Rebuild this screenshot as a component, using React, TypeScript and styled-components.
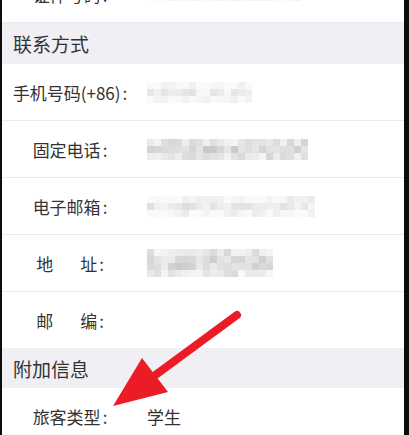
import React from 'react';
import styled, { createGlobalStyle } from 'styled-components';

const GlobalStyle = createGlobalStyle`
    html, body {
        margin: 0;
        padding: 0;
        background: #0d0d0d;
    }
    body {
        font-family: "Noto Sans CJK SC", "Noto Sans", sans-serif;
    }
`;

const Screen = styled.div`
    position: relative;
    width: 409px;
    height: 435px;
    overflow: hidden;
    background: #0d0d0d;
`;

const Panel = styled.div`
    margin: -34px 5px 0 2px;
    background: #fff;
    display: flex;
    flex-direction: column;
`;

const SectionHeader = styled.div<{ $h: number }>`
    height: ${(p) => p.$h}px;
    display: flex;
    align-items: center;
    padding-left: 11px;
    background: #efeff4;
    color: #333;
    font-size: 19px;
`;

const Row = styled.div<{ $last?: boolean }>`
    height: 56px;
    display: flex;
    align-items: center;
    border-bottom: ${(p) => (p.$last ? 'none' : '1px solid #ececee')};
    color: #333;
    font-size: 17px;
`;

const Label = styled.div`
    width: 136px;
    flex-shrink: 0;
    text-align: center;
    white-space: nowrap;
    display: flex;
    justify-content: center;
`;

const Gap = styled.span<{ $w: number }>`
    display: inline-block;
    width: ${(p) => p.$w}px;
`;

const Colon = styled.span`
    margin-left: 2px;
`;

const Value = styled.div`
    margin-left: 9px;
    display: flex;
    align-items: center;
`;

const MosaicGrid = styled.div<{ $cols: number; $cell: number }>`
    display: grid;
    grid-template-columns: repeat(${(p) => p.$cols}, ${(p) => p.$cell}px);
    grid-auto-rows: ${(p) => p.$cell}px;
    filter: blur(0.4px);
`;

const MosaicCell = styled.div``;

function seeded(seed: number) {
    let s = seed;
    return () => {
        s = (s * 9301 + 49297) % 233280;
        return s / 233280;
    };
}

function Mosaic(p: { cols: number; rows: number; base: number; spread: number; seed: number; cell?: number }) {
    const rnd = seeded(p.seed);
    const cells = [];
    for (let r = 0; r < p.rows; r++) {
        for (let c = 0; c < p.cols; c++) {
            const edge = r === 0 || r === p.rows - 1 ? 12 : 0;
            const v = Math.min(250, Math.round(p.base + edge + rnd() * p.spread));
            cells.push(<MosaicCell key={r + '-' + c} style={{ background: `rgb(${v},${v},${v})` }} />);
        }
    }
    return (
        <MosaicGrid $cols={p.cols} $cell={p.cell ?? 7}>
            {cells}
        </MosaicGrid>
    );
}

const Arrow = styled.svg`
    position: absolute;
    left: 0;
    top: 0;
    pointer-events: none;
`;

export default function App() {
    return (
        <Screen>
            <GlobalStyle />
            <Panel>
                <Row>
                    <Label>
                        证件号码<Colon>:</Colon>
                    </Label>
                    <Value>
                        <Mosaic cols={22} rows={2} base={228} spread={18} seed={3} />
                    </Value>
                </Row>
                <SectionHeader $h={41}>联系方式</SectionHeader>
                <Row>
                    <Label>
                        手机号码(+86)<Colon>:</Colon>
                    </Label>
                    <Value>
                        <Mosaic cols={15} rows={3} base={226} spread={22} seed={7} />
                    </Value>
                </Row>
                <Row>
                    <Label>
                        固定电话<Colon>:</Colon>
                    </Label>
                    <Value>
                        <Mosaic cols={23} rows={3} base={200} spread={34} seed={11} />
                    </Value>
                </Row>
                <Row>
                    <Label>
                        电子邮箱<Colon>:</Colon>
                    </Label>
                    <Value>
                        <Mosaic cols={24} rows={3} base={222} spread={24} seed={19} />
                    </Value>
                </Row>
                <Row>
                    <Label>
                        地<Gap $w={27} />址<Colon>:</Colon>
                    </Label>
                    <Value>
                        <Mosaic cols={18} rows={4} base={204} spread={32} seed={23} />
                    </Value>
                </Row>
                <Row $last>
                    <Label>
                        邮<Gap $w={27} />编<Colon>:</Colon>
                    </Label>
                    <Value />
                </Row>
                <SectionHeader $h={40}>附加信息</SectionHeader>
                <Row $last>
                    <Label>
                        旅客类型<Colon>:</Colon>
                    </Label>
                    <Value>学生</Value>
                </Row>
            </Panel>
            <Arrow width="409" height="435" viewBox="0 0 409 435">
                <line x1="237" y1="315" x2="150" y2="379" stroke="#ec1c27" strokeWidth="8" strokeLinecap="round" />
                <polygon points="113,406 142,358 168,392" fill="#ec1c27" />
            </Arrow>
        </Screen>
    );
}
